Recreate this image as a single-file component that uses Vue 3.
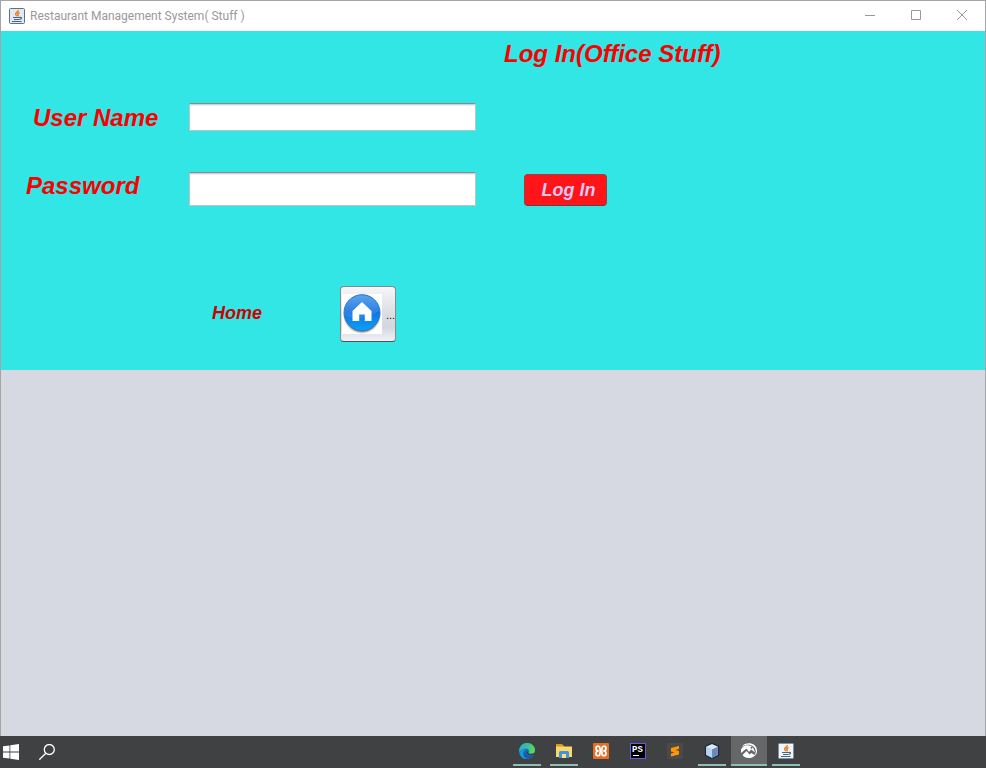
<script setup>
import { ref } from 'vue'

const userName = ref('')
const password = ref('')

const tasks = [
  { id: 'edge', label: 'Edge', running: true },
  { id: 'files', label: 'File Explorer', running: true },
  { id: 'xampp', label: 'XAMPP' },
  { id: 'storm', label: 'PhpStorm' },
  { id: 'sublime', label: 'Sublime Text' },
  { id: 'netbeans', label: 'NetBeans', running: true },
  { id: 'photos', label: 'Image viewer', running: true, active: true },
  { id: 'java', label: 'Java', running: true }
]
</script>

<template>
  <div class="desktop">
    <main class="window">
      <header class="titlebar">
        <svg class="app-icon" viewBox="0 0 16 16" aria-hidden="true">
          <rect x=".5" y=".5" width="15" height="15" rx="1" fill="#e3e9ef" stroke="#58728c" />
          <path d="M9.300 2c.6 1.700-3.800 2.600-2.600 4.500.4.700 1 1.100 1.200 1.700M10.600 4.500c-1.800.6-2.500 1.300-1.600 2.200.5.600.2 1.100-.3 1.500" fill="none" stroke="#e8822d" stroke-width="1.500" />
          <path d="M4 9.500h6.500M5 11.500h5M3 13.500h9.500M10.500 9.500c3-.6 2.500 1.800-.2 2" fill="none" stroke="#3f6789" stroke-width="1.100" />
        </svg>
        <h1 class="caption">Restaurant Management System( Stuff )</h1>
        <div class="controls">
          <button type="button" aria-label="Minimize">
            <svg viewBox="0 0 12 12"><path d="M1 5.500h10" /></svg>
          </button>
          <button type="button" aria-label="Maximize">
            <svg viewBox="0 0 12 12"><path d="M1.500 .5h9v9h-9z" /></svg>
          </button>
          <button type="button" aria-label="Close">
            <svg viewBox="0 0 12 12"><path d="M1 0l10 10M11 0L1 10" /></svg>
          </button>
        </div>
      </header>

      <form class="panel" @submit.prevent>
        <h2 class="heading">Log In(Office Stuff)</h2>
        <label class="label user-label" for="user">User Name</label>
        <input id="user" v-model="userName" class="field user-field" type="text" autocomplete="off" />
        <label class="label password-label" for="password">Password</label>
        <input id="password" v-model="password" class="field password-field" type="password" autocomplete="off" />
        <button class="login" type="submit">Log In</button>
        <div class="home-row">
          <span id="home-label" class="home-label">Home</span>
          <button class="home" type="button" aria-labelledby="home-label">
            <svg viewBox="0 0 40 40" aria-hidden="true">
              <defs>
                <linearGradient id="blue" x1="0" y1="0" x2="0" y2="1">
                  <stop offset="0" stop-color="#4d9ae8" />
                  <stop offset=".5" stop-color="#1573e3" />
                  <stop offset="1" stop-color="#08a2fa" />
                </linearGradient>
                <radialGradient id="shade">
                  <stop offset=".85" stop-color="#555" stop-opacity=".8" />
                  <stop offset="1" stop-color="#999" stop-opacity="0" />
                </radialGradient>
              </defs>
              <rect width="40" height="40" fill="#fff" />
              <ellipse cx="20" cy="21" rx="19" ry="19" fill="url(#shade)" />
              <circle cx="20" cy="18.700" r="18" fill="url(#blue)" stroke="#2878c4" />
              <path d="M2.500 21C12 26 27 25 37.500 16A18 18 0 0 0 5 9 18 18 0 0 0 2.500 21z" fill="#fff" opacity=".09" />
              <path d="M20 8L10.500 17v10h6.700v-6.500h5.600V27h6.700V17z" fill="#fff" />
            </svg>
            <span class="more">...</span>
          </button>
        </div>
      </form>
    </main>

    <footer class="taskbar">
      <button class="system" type="button" aria-label="Start">
        <svg viewBox="0 0 16 16"><path d="M0 2.300l6.500-.9v6.100H0zM7.300 1.300L16 0v7.500H7.300zM0 8.400h6.500v6.200L0 13.700zM7.300 8.400H16V16l-8.700-1.200z" fill="#fff" /></svg>
      </button>
      <button class="system" type="button" aria-label="Search">
        <svg viewBox="0 0 16 16"><g fill="none" stroke="#fff" stroke-width="1.300"><circle cx="10.300" cy="5.500" r="5" /><path d="M6.800 9.300L.3 15.700" /></g></svg>
      </button>
      <nav class="tasks" aria-label="Applications">
        <button
          v-for="task in tasks"
          :key="task.id"
          type="button"
          class="task"
          :class="{ running: task.running, active: task.active }"
          :aria-label="task.label"
        >
          <svg v-if="task.id === 'edge'" viewBox="0 0 16 16">
            <defs>
              <linearGradient id="edge-top" x1="0" y1="0" x2="1" y2=".4"><stop offset="0" stop-color="#22a7db" /><stop offset="1" stop-color="#59d75a" /></linearGradient>
            </defs>
            <circle cx="8" cy="8" r="8" fill="#1678cf" />
            <path d="M.1 7C1 2.500 4.300 0 8 0c4.800 0 8 3.300 8 6.900 0 2.600-1.900 4.100-4.100 4.100-1.600 0-2.500-.7-2.100-1.300 1.300-1.700.3-4.300-2.700-4.300C4 5.400 1.300 7.200.1 9z" fill="url(#edge-top)" />
            <path d="M6.200 6.200C3 9 5 14.500 9.200 15.900 5.300 16.600 1.400 14.300.5 10.700.9 7.700 3.300 5.900 6.200 6.200z" fill="#1399dc" />
            <path d="M6.400 7.200c-1.700 3.200 2.100 7.300 7.900 5-2.500 3.700-5.500 3.800-6.900 3.100C4 13.500 3.600 9.200 6.400 7.200z" fill="#145aa8" />
            <path d="M9 7c-2 2.500 1.400 5.500 7 2.800l-.8 2c-4.200 1.600-8.700-.1-8.200-3.300z" fill="#3c4043" />
          </svg>
          <svg v-else-if="task.id === 'files'" viewBox="0 0 16 16">
            <path d="M0 1h6l2 2v3H0z" fill="#d99b12" />
            <path d="M0 3.500h16V14H0z" fill="#ffd768" />
            <path d="M3 15V9l1-1h8l1 1v6h-3v-4H6v4z" fill="#3d96df" />
            <path d="M6 11h4v4H6z" fill="#ffe08a" />
          </svg>
          <svg v-else-if="task.id === 'xampp'" viewBox="0 0 16 16">
            <rect width="16" height="16" rx="1" fill="#e96e24" />
            <path d="M5.500 3.300Q3 3 3 5.300T5 8Q3 8.500 3 10.700T5.500 12.700Q7 12.500 7 10.500 7 8 8 8T9 5.500Q9 3.500 10.500 3.300 13 3 13 5.300T11 8Q13 8.500 13 10.700T10.500 12.700Q9 12.500 9 10.500 9 8 8 8T7 5.500Q7 3.500 5.500 3.300z" fill="none" stroke="#fff" stroke-width="1.800" stroke-linejoin="round" />
          </svg>
          <svg v-else-if="task.id === 'storm'" viewBox="0 0 16 16">
            <rect x=".5" y=".5" width="15" height="15" fill="#000" stroke="#6958e8" />
            <text x="2" y="9" class="storm-text">PS</text>
            <path d="M3 12.500h6" stroke="#fff" />
          </svg>
          <svg v-else-if="task.id === 'sublime'" viewBox="0 0 16 16">
            <rect width="16" height="16" rx="1" fill="#4a4a4a" />
            <path d="M4 5l8-2v3L8.500 7 12 8v3.500L4 13.500v-3L7.500 9.500 4 8.500z" fill="#ff9800" />
          </svg>
          <svg v-else-if="task.id === 'netbeans'" viewBox="0 0 16 16">
            <path d="M8 .5l6.500 3v8.800L8 15.500l-6.500-3.200V3.500z" fill="#a7c6e6" stroke="#1a2748" stroke-width="1.200" />
            <path d="M2.200 3.800L8 1.200l5.800 2.600L8 6.500z" fill="#dceaf3" />
            <path d="M8 6.500l5.800-2.700v8L8 14.800z" fill="#6889b9" />
            <path d="M2.200 4L8 6.500v8.300l-5.800-3z" fill="#b4d5ed" />
          </svg>
          <svg v-else-if="task.id === 'photos'" viewBox="0 0 16 16">
            <path d="M1 3.300C4.500-1.500 16-1 16 8c0 4-3.500 6.500-7 7-3.500.3-6-1-7.500-3l4-4 3 3.500 2-1.500 3 2c1-1.200 1.300-2.500 1.200-4C14 1.500 6.500.2 1 3.300z" fill="#fff" />
            <path d="M0 7c1-5 8-6.500 12-2.500l2.200 5-4.200-3-2 2.400L5.500 5.500 0 10z" fill="#fff" />
            <circle cx="10.500" cy="4.700" r="1" fill="#666769" />
          </svg>
          <svg v-else viewBox="0 0 16 16">
            <rect x=".5" y=".5" width="15" height="15" rx="1" fill="#f3f5f6" stroke="#7891a5" />
            <path d="M9.300 2c.6 1.700-3.800 2.600-2.600 4.500.4.700 1 1.100 1.200 1.700M10.600 4.500c-1.800.6-2.500 1.300-1.600 2.200.5.600.2 1.100-.3 1.500" fill="none" stroke="#e8822d" stroke-width="1.500" />
            <path d="M4 9.500h6.500M5 11.500h5M3 13.500h9.500M10.500 9.500c3-.6 2.500 1.800-.2 2" fill="none" stroke="#3f6789" stroke-width="1.100" />
          </svg>
        </button>
      </nav>
    </footer>
  </div>
</template>

<style>
body {
  margin: 0;
  background: #fff;
}
</style>

<style scoped>
.desktop {
  display: flex;
  flex-direction: column;
  box-sizing: border-box;
  min-height: 100vh;
  padding-bottom: 13px;
  font-family: "Liberation Sans", Arial, sans-serif;
}
.desktop *,
.desktop *::after {
  box-sizing: border-box;
}
button {
  padding: 0;
  border: 0;
  background: none;
  font-family: inherit;
}
.window {
  flex: 1;
  border: 1px solid #a5a5a5;
  border-bottom: 0;
  background: #d6d9e1;
}
.titlebar {
  display: flex;
  align-items: center;
  height: 30px;
  padding-left: 8px;
  background: #fff;
}
.app-icon {
  width: 16px;
  height: 16px;
  margin-right: 5px;
}
.caption {
  flex: 1;
  margin: 0;
  color: #999;
  font: 400 12px/16px Roboto, "Open Sans", sans-serif;
}
.controls {
  display: flex;
}
.controls button {
  display: grid;
  place-items: center;
  width: 46px;
  height: 30px;
}
.controls svg {
  width: 12px;
  height: 12px;
  fill: none;
  stroke: #999;
}
.panel {
  display: grid;
  grid-template-columns: 188px 287px 1fr;
  grid-template-rows: 72px 28px 41px 34px 80px 56px;
  padding-bottom: 28px;
  background: #31e6e5;
}
.heading {
  grid-area: 1 / 3;
  margin: 9px 0 0 28px;
  color: #fa0000;
  font: italic 700 24px/28px "Liberation Sans", Arial, sans-serif;
}
.label {
  color: #fa0000;
  font-size: 24px;
  font-style: italic;
  font-weight: 700;
}
.user-label {
  grid-area: 2 / 1;
  padding-left: 32px;
  line-height: 30px;
}
.password-label {
  grid-area: 4 / 1;
  padding-left: 25px;
  line-height: 28px;
}
.field {
  width: 100%;
  margin: 0;
  padding: 4px 6px;
  border: 1px solid #b9c5c8;
  border-top-color: #858b90;
  border-radius: 0;
  background: #fff;
  box-shadow: inset 0 1px #d0d0d0, inset 0 2px #eee;
  font: 14px "Liberation Sans", Arial, sans-serif;
}
.user-field {
  grid-area: 2 / 2;
}
.password-field {
  grid-area: 4 / 2;
}
.login {
  grid-area: 4 / 3;
  align-self: end;
  width: 83px;
  height: 32px;
  margin-left: 48px;
  padding-left: 6px;
  border: 1px solid #a43a42;
  border-bottom-color: #713c42;
  border-radius: 4px;
  background: #ff1418;
  color: #d6c8f4;
  font-size: 18px;
  font-style: italic;
  font-weight: 700;
}
.home-row {
  grid-area: 6 / 1 / 7 / 4;
  display: flex;
  align-items: center;
  padding-left: 211px;
}
.home-label {
  width: 128px;
  padding-bottom: 2px;
  color: #cc0000;
  font-size: 18px;
  font-style: italic;
  font-weight: 700;
  line-height: 20px;
}
.home {
  display: flex;
  align-items: center;
  gap: 4px;
  width: 56px;
  height: 56px;
  padding-left: 1px;
  border: 1px solid #858a8d;
  border-bottom-color: #4f5357;
  border-radius: 4px;
  background: linear-gradient(#f5f6f8, #dadde4 50%, #d3d7df 75%, #f1f3fa);
  color: #000;
  font-size: 11px;
}
.home svg {
  flex: none;
  width: 40px;
  height: 40px;
}
.more {
  padding-top: 2px;
}
.taskbar {
  display: flex;
  height: 32px;
  background: #3f4143;
}
.system {
  display: grid;
  place-items: center;
  width: 36px;
  height: 32px;
}
.system:first-child {
  width: 22px;
  margin-right: 7px;
}
.system svg,
.task svg {
  display: block;
  width: 16px;
  height: 16px;
}
.tasks {
  display: flex;
  gap: 1px;
  margin: 0 auto;
  padding-left: 262px;
}
.task {
  display: grid;
  place-items: center;
  position: relative;
  width: 36px;
  height: 30px;
}
.task.active {
  background: #666769;
}
.task.running::after {
  content: "";
  position: absolute;
  right: 4px;
  bottom: 0;
  left: 4px;
  height: 2px;
  background: #8fbeb5;
}
.task.active::after {
  right: 0;
  left: 0;
}
.storm-text {
  fill: #fff;
  font: 700 9px "Liberation Mono", monospace;
}
</style>
